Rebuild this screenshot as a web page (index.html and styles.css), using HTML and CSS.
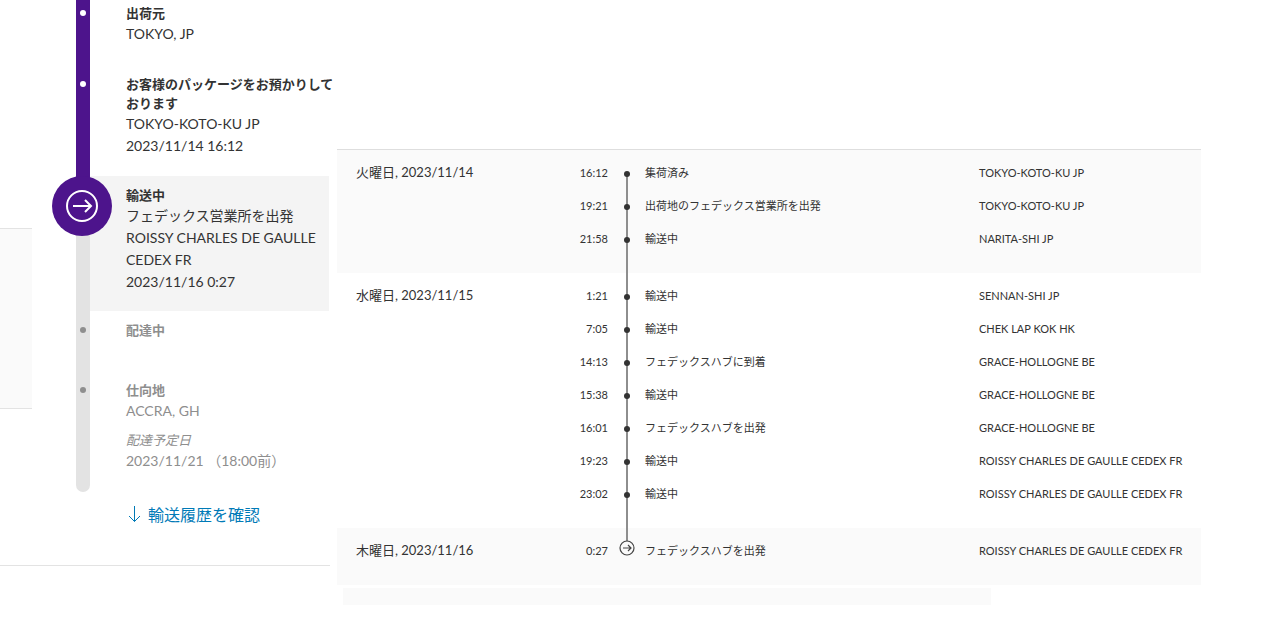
FILE: index.html
```html
<!DOCTYPE html>
<html lang="ja">
<head>
<meta charset="utf-8">
<title>輸送履歴</title>
<link rel="stylesheet" href="styles.css">
</head>
<body>
<div class="page">
  <aside class="summary">
    <div class="summary-body">
      <div class="side-panel"></div>
      <div class="progress">
        <ol class="steps">
          <li class="step step-done step-origin">
            <span class="rail"><span class="step-dot"></span></span>
            <div class="step-body">
              <h3 class="step-title">出荷元</h3>
              <p class="step-text">TOKYO, JP</p>
            </div>
          </li>
          <li class="step step-done step-received">
            <span class="rail"><span class="step-dot"></span></span>
            <div class="step-body">
              <h3 class="step-title">お客様のパッケージをお預かりしております</h3>
              <p class="step-text">TOKYO-KOTO-KU JP</p>
              <p class="step-text">2023/11/14 16:12</p>
            </div>
          </li>
          <li class="step step-current">
            <span class="rail">
              <svg class="step-badge" viewBox="0 0 60 60" aria-hidden="true">
                <circle cx="30" cy="30" r="30" fill="#4d148c"/>
                <circle cx="30" cy="30" r="15" fill="none" stroke="#fff" stroke-width="2"/>
                <path d="M21 30H39M33 24L39 30L33 36" fill="none" stroke="#fff" stroke-width="2"/>
              </svg>
            </span>
            <div class="step-body">
              <h3 class="step-title">輸送中</h3>
              <p class="step-text">フェデックス営業所を出発</p>
              <p class="step-text">ROISSY CHARLES DE GAULLE CEDEX FR</p>
              <p class="step-text">2023/11/16 0:27</p>
            </div>
          </li>
          <li class="step step-next step-delivery">
            <span class="rail"><span class="step-dot"></span></span>
            <div class="step-body">
              <h3 class="step-title">配達中</h3>
            </div>
          </li>
          <li class="step step-next step-destination">
            <span class="rail"><span class="step-dot"></span></span>
            <div class="step-body">
              <h3 class="step-title">仕向地</h3>
              <p class="step-text">ACCRA, GH</p>
              <p class="step-note">配達予定日</p>
              <p class="step-text">2023/11/21 （18:00前）</p>
            </div>
          </li>
        </ol>
        <a class="history-link" href="#history">
          <svg class="history-arrow" viewBox="0 0 14 18" aria-hidden="true">
            <path d="M7.500 0V15.500M2 10L7.500 15.500L13 10" fill="none" stroke="currentColor"/>
          </svg>
          輸送履歴を確認
        </a>
      </div>
    </div>
  </aside>

  <main class="history" id="history">
    <table class="events">
      <colgroup><col class="col-date"><col class="col-time"><col class="col-node"><col><col class="col-place"></colgroup>
      <tbody class="day day-shaded">
        <tr><th scope="rowgroup" rowspan="3">火曜日, 2023/11/14</th><td class="time">16:12</td><td class="node"><span class="dot"></span></td><td>集荷済み</td><td>TOKYO-KOTO-KU JP</td></tr>
        <tr><td class="time">19:21</td><td class="node"><span class="dot"></span></td><td>出荷地のフェデックス営業所を出発</td><td>TOKYO-KOTO-KU JP</td></tr>
        <tr><td class="time">21:58</td><td class="node"><span class="dot"></span></td><td>輸送中</td><td>NARITA-SHI JP</td></tr>
      </tbody>
      <tbody class="day">
        <tr><th scope="rowgroup" rowspan="7">水曜日, 2023/11/15</th><td class="time">1:21</td><td class="node"><span class="dot"></span></td><td>輸送中</td><td>SENNAN-SHI JP</td></tr>
        <tr><td class="time">7:05</td><td class="node"><span class="dot"></span></td><td>輸送中</td><td>CHEK LAP KOK HK</td></tr>
        <tr><td class="time">14:13</td><td class="node"><span class="dot"></span></td><td>フェデックスハブに到着</td><td>GRACE-HOLLOGNE BE</td></tr>
        <tr><td class="time">15:38</td><td class="node"><span class="dot"></span></td><td>輸送中</td><td>GRACE-HOLLOGNE BE</td></tr>
        <tr><td class="time">16:01</td><td class="node"><span class="dot"></span></td><td>フェデックスハブを出発</td><td>GRACE-HOLLOGNE BE</td></tr>
        <tr><td class="time">19:23</td><td class="node"><span class="dot"></span></td><td>輸送中</td><td>ROISSY CHARLES DE GAULLE CEDEX FR</td></tr>
        <tr><td class="time">23:02</td><td class="node"><span class="dot"></span></td><td>輸送中</td><td>ROISSY CHARLES DE GAULLE CEDEX FR</td></tr>
      </tbody>
      <tbody class="day day-shaded">
        <tr><th scope="rowgroup">木曜日, 2023/11/16</th><td class="time">0:27</td><td class="node"><svg class="node-icon" viewBox="0 0 16 16" aria-hidden="true"><circle cx="8" cy="8" r="7" fill="#fafafa" stroke="#444" stroke-width="1.200"/><path d="M4 8H12M9 5L12 8L9 11" fill="none" stroke="#444" stroke-width="1.200"/></svg></td><td>フェデックスハブを出発</td><td>ROISSY CHARLES DE GAULLE CEDEX FR</td></tr>
      </tbody>
    </table>
    <div class="history-footer"></div>
  </main>
</div>
</body>
</html>
```

FILE: styles.css
```css
* {
  box-sizing: border-box;
}

body {
  margin: 0;
  background: #fff;
  color: #333;
  font-family: Lato, "Noto Sans CJK JP", sans-serif;
}

.page {
  display: grid;
  grid-template-columns: 337px 1fr;
  align-items: start;
}

/* Shipment summary */
.summary-body {
  display: flex;
  padding-bottom: 38px;
}

.summary::after {
  content: "";
  display: block;
  margin-right: 7px;
  border-top: 1px solid #e3e3e3;
}

.side-panel {
  width: 32px;
  height: 181px;
  margin-top: 228px;
  border: solid #e3e3e3;
  border-width: 1px 0;
  background: #fafafa;
}

.progress {
  flex: 1;
  padding-left: 44px;
}

.steps {
  margin: 0;
  padding: 0;
  list-style: none;
}

.step {
  display: grid;
  grid-template-columns: 14px 1fr;
}

.rail {
  position: relative;
  padding-top: 16px;
  background: #e3e3e3;
}

.step-done .rail {
  padding-top: 10px;
  background: #4d148c;
}

.step-dot {
  display: block;
  width: 6px;
  height: 6px;
  margin: 0 auto;
  border-radius: 50%;
  background: #8e8e8e;
}

.step-done .step-dot {
  background: #fff;
}

.step-badge {
  position: absolute;
  top: 0;
  left: -24px;
  width: 60px;
  height: 60px;
}

.step-body {
  padding: 10px 0 0 36px;
}

.step-done .step-body {
  padding-top: 4px;
}

.step-origin .step-body {
  padding-bottom: 26px;
}

.step-received .step-body {
  padding-bottom: 19px;
}

.step-current .step-body {
  margin-right: 8px;
  padding-bottom: 18px;
  background: #f4f4f4;
}

.step-current .rail {
  background: linear-gradient(#4d148c 30px, #e3e3e3 30px);
}

.step-delivery .step-body {
  padding-bottom: 31px;
}

.step-destination .step-body {
  padding-bottom: 20px;
}

.step-destination .rail {
  border-radius: 0 0 7px 7px;
}

.step-next {
  color: #8e8e8e;
}

.step-title,
.step-text,
.step-note {
  margin: 0;
  font-weight: 400;
}

.step-title {
  font-size: 13px;
  font-weight: 700;
  line-height: 19px;
}

.step-text {
  font-size: 14px;
  line-height: 22px;
}

.step-note {
  margin-top: 9px;
  font-size: 13px;
  font-style: italic;
  line-height: 19px;
}

.history-link {
  display: flex;
  align-items: center;
  gap: 7px;
  margin-top: 11px;
  padding-left: 51px;
  color: #007ab7;
  font-size: 16px;
  line-height: 24px;
  text-decoration: none;
}

.history-arrow {
  width: 14px;
  height: 18px;
}

/* Travel history */
.history {
  margin: 149px 82px 0 0;
}

.events {
  width: 100%;
  border-top: 1px solid #dedede;
  border-collapse: separate;
  border-spacing: 0;
  table-layout: fixed;
  font-size: 11px;
  line-height: 33px;
}

.col-date {
  width: 180px;
}

.col-time {
  width: 91px;
}

.col-node {
  width: 37px;
}

.col-place {
  width: 222px;
}

.day-shaded {
  background: #fafafa;
}

.events th,
.events td {
  padding: 0;
  text-align: left;
  vertical-align: top;
  white-space: nowrap;
}

.events th {
  padding-left: 19px;
  font-size: 13px;
  font-weight: 400;
}

.day tr:first-child > * {
  padding-top: 6px;
}

.day tr:last-child > td {
  padding-bottom: 18px;
}

.events .time {
  text-align: right;
}

.node {
  position: relative;
}

.node::before {
  content: "";
  position: absolute;
  top: 0;
  bottom: 0;
  left: 18px;
  width: 2px;
  background: #8e8e8e;
}

.day:first-of-type tr:first-child .node::before {
  top: 24px;
}

.day:last-of-type tr:last-child .node::before {
  bottom: 40px;
}

.dot {
  position: relative;
  display: block;
  width: 6px;
  height: 6px;
  margin: 15px auto 12px;
  border-radius: 50%;
  background: #333;
}

.node-icon {
  position: relative;
  display: block;
  width: 16px;
  height: 16px;
  margin: 6px auto 0;
}

.history-footer {
  width: 75%;
  height: 17px;
  margin: 3px 0 0 6px;
  background: #fafafa;
}
```
